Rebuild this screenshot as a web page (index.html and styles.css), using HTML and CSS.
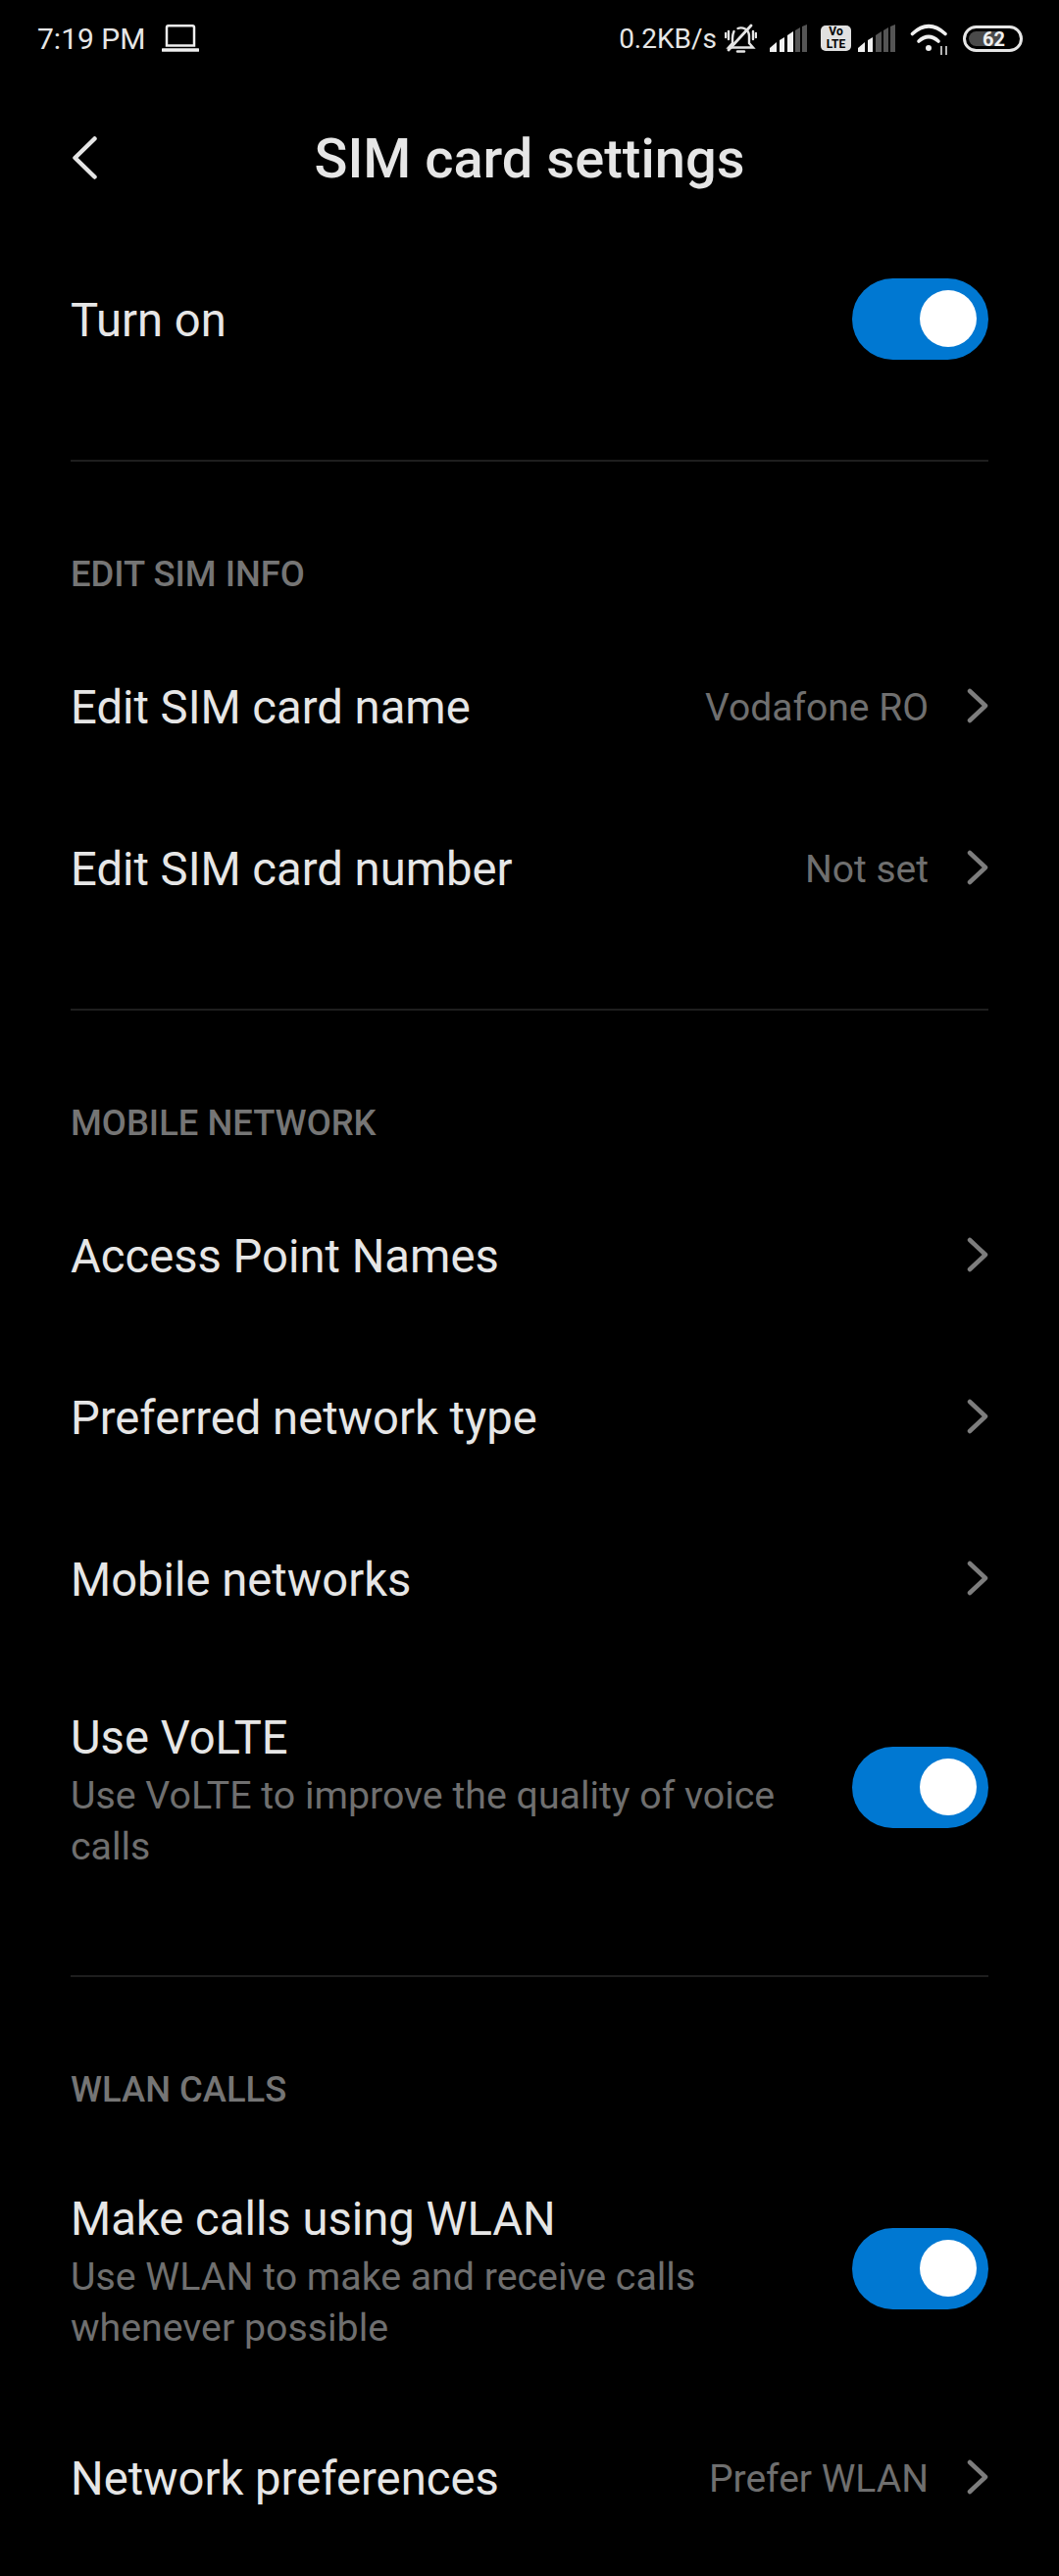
FILE: index.html
```html
<!DOCTYPE html>
<html lang="en">
    <head>
        <meta charset="UTF-8">
        <meta name="viewport" content="width=device-width, initial-scale=1.0">
        <title>SIM card settings</title>
        <link rel="stylesheet" href="styles.css">
    </head>
    <body>
        <div class="status">
            <div class="status-left">
                <span class="clock">7:19 PM</span>
                <svg class="laptop" width="38" height="28" viewBox="0 0 38 28" fill="none" stroke="#f0f0f0">
                    <path d="M5 21.5V3Q5 1.3 6.7 1.3H31.3Q33 1.3 33 3V21.5Z" stroke-width="2.5"/>
                    <path d="M1 26H37" stroke-width="3.4" stroke-linecap="round"/>
                </svg>
            </div>
            <div class="status-right">
                <span class="speed">0.2KB/s</span>
                <svg class="bell" width="33" height="30" viewBox="0 0 33 30" fill="none" stroke="#e6e6e6" stroke-width="2.4" stroke-linecap="round">
                    <path d="M9.5 8Q8 11 8 15V20L4 24.5H29L25 20V13Q25 8 21 5.5Q17 3.5 13.5 5"/>
                    <path d="M13 28.5H20"/>
                    <path d="M4 8V16M1 10V14M29 8V16M32 10V14"/>
                    <path d="M4 27L27 2" stroke-width="2.8"/>
                </svg>
                <svg class="signal" width="38" height="28" viewBox="0 0 38 28">
                    <polygon points="0,28 0,24 7,18 7,28" fill="#f0f0f0"/>
                    <polygon points="10,28 10,16 15,13 15,28" fill="#f0f0f0"/>
                    <polygon points="18,28 18,11 24,7 24,28" fill="#f0f0f0"/>
                    <polygon points="26,28 26,6 31,3 31,28" fill="#555"/>
                    <polygon points="33,28 33,2 38,0 38,28" fill="#555"/>
                </svg>
                <span class="volte">Vo<br>LTE</span>
                <svg class="signal" width="38" height="28" viewBox="0 0 38 28">
                    <polygon points="0,28 0,24 7,18 7,28" fill="#f0f0f0"/>
                    <polygon points="10,28 10,16 15,13 15,28" fill="#f0f0f0"/>
                    <polygon points="18,28 18,11 24,7 24,28" fill="#555"/>
                    <polygon points="26,28 26,6 31,3 31,28" fill="#555"/>
                    <polygon points="33,28 33,2 38,0 38,28" fill="#555"/>
                </svg>
                <svg class="wifi" width="40" height="34" viewBox="0 0 40 34" fill="none" stroke="#f0f0f0" stroke-width="3.6" stroke-linecap="round">
                    <path d="M2.5 12.5Q19 -3 36 12.5"/>
                    <path d="M9 20Q19 11 29 20"/>
                    <circle cx="19" cy="27" r="3" fill="#f0f0f0" stroke="none"/>
                    <path d="M32 25V34M37 25V34" stroke-width="2" stroke="#b4b4b4" stroke-linecap="butt"/>
                </svg>
                <div class="battery"><span class="battery-fill"></span><span class="battery-num">62</span></div>
            </div>
        </div>

        <div class="header">
            <svg class="back" width="25" height="44" viewBox="0 0 25 44" fill="none" stroke="#e6e6e6" stroke-width="4.5" stroke-linecap="round" stroke-linejoin="round">
                <path d="M22.5 2.5L2.5 22L22.5 41.5"/>
            </svg>
            <h1>SIM card settings</h1>
        </div>

        <div class="row first">
            <div class="label">Turn on</div>
            <div class="toggle"><span class="knob"></span></div>
        </div>
        <div class="divider first-divider"></div>

        <div class="section">EDIT SIM INFO</div>
        <div class="row">
            <div class="label">Edit SIM card name</div>
            <span class="value">Vodafone RO</span>
            <svg class="chevron" width="22" height="36" viewBox="0 0 22 36" fill="none"><path d="M3 3L19 18L3 33"/></svg>
        </div>
        <div class="row">
            <div class="label">Edit SIM card number</div>
            <span class="value">Not set</span>
            <svg class="chevron" width="22" height="36" viewBox="0 0 22 36" fill="none"><path d="M3 3L19 18L3 33"/></svg>
        </div>
        <div class="divider"></div>

        <div class="section">MOBILE NETWORK</div>
        <div class="row">
            <div class="label">Access Point Names</div>
            <svg class="chevron" width="22" height="36" viewBox="0 0 22 36" fill="none"><path d="M3 3L19 18L3 33"/></svg>
        </div>
        <div class="row">
            <div class="label">Preferred network type</div>
            <svg class="chevron" width="22" height="36" viewBox="0 0 22 36" fill="none"><path d="M3 3L19 18L3 33"/></svg>
        </div>
        <div class="row">
            <div class="label">Mobile networks</div>
            <svg class="chevron" width="22" height="36" viewBox="0 0 22 36" fill="none"><path d="M3 3L19 18L3 33"/></svg>
        </div>
        <div class="row tall">
            <div class="text">
                <div class="label">Use VoLTE</div>
                <div class="sub">Use VoLTE to improve the quality of voice calls</div>
            </div>
            <div class="toggle"><span class="knob"></span></div>
        </div>
        <div class="divider"></div>

        <div class="section">WLAN CALLS</div>
        <div class="row tall">
            <div class="text">
                <div class="label">Make calls using WLAN</div>
                <div class="sub">Use WLAN to make and receive calls whenever possible</div>
            </div>
            <div class="toggle"><span class="knob"></span></div>
        </div>
        <div class="row">
            <div class="label">Network preferences</div>
            <span class="value">Prefer WLAN</span>
            <svg class="chevron" width="22" height="36" viewBox="0 0 22 36" fill="none"><path d="M3 3L19 18L3 33"/></svg>
        </div>
    </body>
</html>
```

FILE: styles.css
```css
html, body {
    margin: 0;
    padding: 0;
    background-color: #000;
}

body {
    width: 1080px;
    height: 2628px;
    overflow: hidden;
    font-family: Roboto, "Noto Sans", sans-serif;
    color: #e6e6e6;
}

.status {
    display: flex;
    justify-content: space-between;
    align-items: center;
    height: 78px;
    padding: 0 37px 0 38px;
}

.status-left, .status-right {
    display: flex;
    align-items: center;
}

.clock {
    font-size: 30px;
    color: #e6e6e6;
}

.speed {
    font-size: 28px;
    color: #e6e6e6;
}

.laptop {
    margin-left: 17px;
}

.bell {
    margin-left: 8px;
}

.signal {
    margin-left: 13px;
}

.volte {
    display: block;
    width: 31px;
    height: 26px;
    margin-left: 14px;
    background-color: #e0e0e0;
    border-radius: 5px;
    color: #000;
    font-size: 12px;
    font-weight: 700;
    line-height: 13px;
    text-align: center;
}

.volte + .signal {
    margin-left: 7px;
}

.wifi {
    margin-left: 15px;
}

.battery {
    position: relative;
    width: 55px;
    height: 21px;
    margin-left: 14px;
    border: 3px solid #e6e6e6;
    border-radius: 14px;
    overflow: hidden;
}

.battery-fill {
    display: block;
    width: 34px;
    height: 15px;
    margin: 3px;
    background-color: #4a4a4a;
    border-radius: 8px;
}

.battery-num {
    position: absolute;
    top: -2px;
    left: 17px;
    font-size: 20px;
    font-weight: 700;
    line-height: 26px;
    color: #f0f0f0;
}

.header {
    position: relative;
    display: flex;
    justify-content: center;
    align-items: center;
    height: 168px;
}

.back {
    position: absolute;
    left: 74px;
    top: 61px;
}

h1 {
    margin: 0;
    font-size: 56px;
    font-weight: 500;
    color: #e6e6e6;
}

.row {
    display: flex;
    align-items: center;
    height: 165px;
    padding: 0 72px;
}

.row.first {
    height: 159px;
}

.row.tall {
    height: 261px;
}

.row.tall .toggle {
    margin-bottom: 2px;
}

.text {
    flex: 1;
}

.label {
    flex: 1;
    font-size: 47.2px;
    line-height: 66px;
    color: #e6e6e6;
}

.row.first .label {
    padding-top: 3px;
}

.sub {
    width: 760px;
    font-size: 39.3px;
    line-height: 52px;
    color: #6f6f6f;
}

.value {
    margin-right: 39px;
    font-size: 39px;
    color: #6f6f6f;
}

.chevron {
    margin-bottom: 3px;
    stroke: #7d7d7d;
    stroke-width: 4.5;
    stroke-linecap: round;
    stroke-linejoin: round;
}

.toggle {
    position: relative;
    width: 139px;
    height: 83px;
    background-color: #0078d2;
    border-radius: 42px;
}

.knob {
    position: absolute;
    top: 12px;
    right: 12px;
    width: 58px;
    height: 58px;
    background-color: #fff;
    border-radius: 50%;
}

.divider {
    height: 2px;
    margin: 60px 72px 0;
    background-color: #1e1e1e;
}

.divider.first-divider {
    margin-top: 64px;
}

.section {
    display: flex;
    align-items: center;
    height: 107px;
    margin-top: 61px;
    padding: 0 72px;
    font-size: 36.4px;
    font-weight: 500;
    color: #757575;
}
```
